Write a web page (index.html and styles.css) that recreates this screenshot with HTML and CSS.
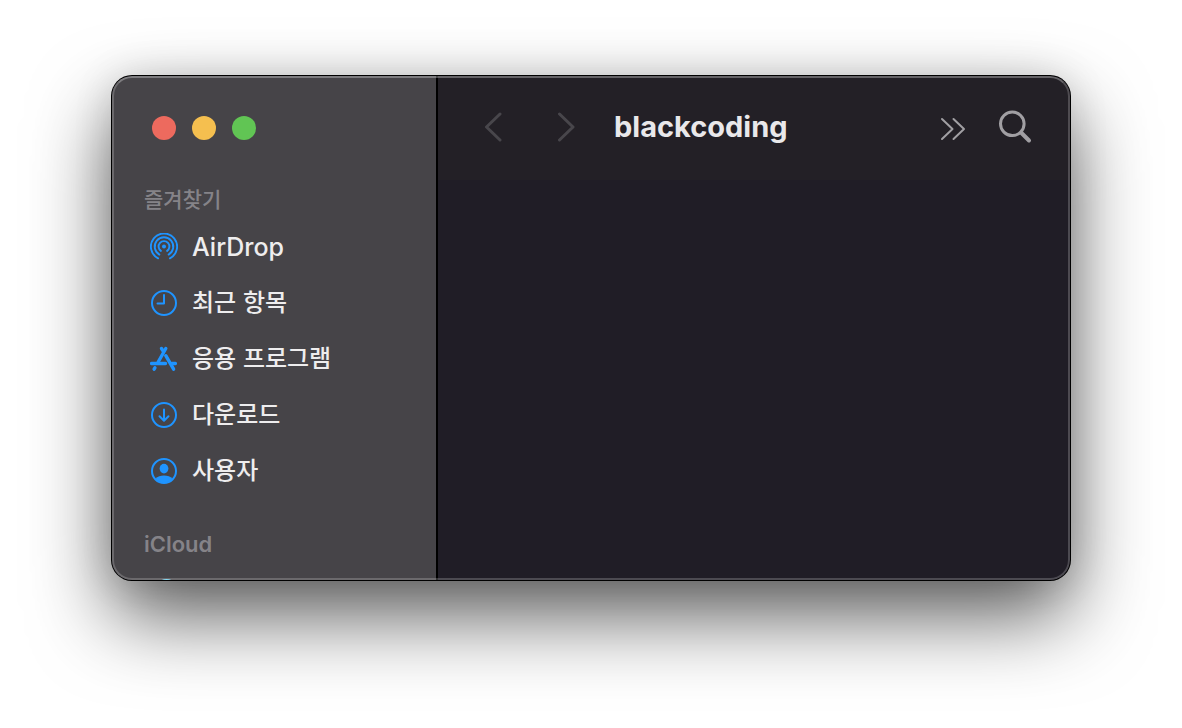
FILE: index.html
```html
<!DOCTYPE html>
<html lang="ko">
<head>
<meta charset="utf-8">
<title>blackcoding</title>
<link rel="stylesheet" href="styles.css">
</head>
<body>
<main class="window">
  <aside class="sidebar">
    <div class="lights">
      <button class="light close" aria-label="닫기"></button>
      <button class="light minimize" aria-label="최소화"></button>
      <button class="light expand" aria-label="확대"></button>
    </div>
    <h2 class="heading">즐겨찾기</h2>
    <nav class="places">
      <a class="place latin" href="#">
        <svg class="icon" viewBox="0 0 28 28" fill="none" stroke="currentColor" stroke-width="1.9" stroke-linecap="round">
          <circle cx="14" cy="13.5" r="2" fill="currentColor" stroke="none"/>
          <path d="M10.9 17.9A5.4 5.4 0 1 1 17.1 17.9"/>
          <path d="M9.4 21.6A9.3 9.3 0 1 1 18.6 21.6"/>
          <path d="M8.1 25.3A13.1 13.1 0 1 1 19.9 25.3"/>
        </svg>
        <span>AirDrop</span>
      </a>
      <a class="place" href="#">
        <svg class="icon" viewBox="0 0 28 28" fill="none" stroke="currentColor" stroke-width="2" stroke-linecap="round" stroke-linejoin="round">
          <circle cx="14" cy="14" r="12"/>
          <path d="M14 6v8.5H7.5"/>
        </svg>
        <span>최근 항목</span>
      </a>
      <a class="place" href="#">
        <svg class="icon" viewBox="0 0 28 28" fill="none" stroke="currentColor" stroke-width="3.4" stroke-linecap="round">
          <path d="M15.8 3.5L8.2 17"/>
          <path d="M1.6 18.5H15.5M21.8 18.5H25.4"/>
          <path d="M11.5 3.5L13.2 6.1M15.8 10.7L23.6 24.2"/>
          <path d="M4.9 22.8L4.1 24.2"/>
        </svg>
        <span>응용 프로그램</span>
      </a>
      <a class="place" href="#">
        <svg class="icon" viewBox="0 0 28 28" fill="none" stroke="currentColor" stroke-width="2" stroke-linecap="round" stroke-linejoin="round">
          <circle cx="14" cy="14" r="12"/>
          <path d="M14 8.5V19.5M9.5 15.3L14 19.8L18.5 15.3"/>
        </svg>
        <span>다운로드</span>
      </a>
      <a class="place" href="#">
        <svg class="icon" viewBox="0 0 28 28" fill="none">
          <circle cx="14" cy="14" r="12" stroke="currentColor" stroke-width="2"/>
          <ellipse cx="14" cy="11.6" rx="4.4" ry="4.8" fill="currentColor"/>
          <path d="M5.5 22C7.5 19.6 10.5 18.6 14 18.6S20.5 19.6 22.5 22A12 12 0 0 1 5.5 22Z" fill="currentColor"/>
        </svg>
        <span>사용자</span>
      </a>
    </nav>
    <h2 class="heading next">iCloud</h2>
    <nav class="places">
      <a class="place cloud" href="#" aria-label="iCloud Drive">
        <svg class="icon" viewBox="0 0 28 28" fill="none" stroke="currentColor" stroke-width="2">
          <path d="M7 21a6 6 0 0 1 0-12A10 10 0 0 1 26 9a6 6 0 0 1-2 12Z"/>
        </svg>
      </a>
    </nav>
  </aside>
  <section class="content">
    <header class="toolbar">
      <div class="history">
        <button class="tool dim" aria-label="뒤로">
          <svg width="32" height="32" viewBox="0 0 32 32"><path d="M22 2L8.5 15L22 28"/></svg>
        </button>
        <button class="tool dim" aria-label="앞으로">
          <svg width="32" height="32" viewBox="0 0 32 32"><path d="M9.5 2L23 15L9.5 28"/></svg>
        </button>
      </div>
      <h1 class="title">blackcoding</h1>
      <button class="tool more" aria-label="더 보기">
        <svg width="32" height="32" viewBox="0 0 32 32"><path d="M4 7L14.5 17L4 27M15.5 7L26 17L15.5 27"/></svg>
      </button>
      <button class="tool search" aria-label="검색">
        <svg width="36" height="36" viewBox="0 0 36 36"><circle cx="14.3" cy="13.8" r="11.8"/><path d="M23.5 23L31 30.5" stroke-width="4"/></svg>
      </button>
    </header>
  </section>
</main>
</body>
</html>
```
FILE: styles.css
```css
* {
  box-sizing: border-box;
}

body {
  margin: 0;
  height: 100vh;
  padding: 76px 112px 148px;
  background: #fff;
  font-family: Inter, "Noto Sans CJK KR", sans-serif;
}

.window {
  position: relative;
  display: flex;
  height: 100%;
  border-radius: 20px;
  overflow: hidden;
  background: #201d26;
  box-shadow:
    0 0 0 1px #000,
    0 0 40px rgba(0, 0, 0, 0.12),
    0 36px 80px rgba(0, 0, 0, 0.64);
}

/* light rim over the window's edge */
.window::after {
  content: "";
  position: absolute;
  inset: 0;
  border: 2px solid rgba(255, 255, 255, 0.2);
  border-top-color: rgba(255, 255, 255, 0.3);
  border-radius: 20px;
  pointer-events: none;
}

.sidebar {
  flex: none;
  width: 326px;
  overflow: hidden;
  background: #464448;
  border-right: 2px solid #000;
}

.lights {
  display: flex;
  align-items: center;
  gap: 16px;
  height: 104px;
  padding-left: 40px;
}

.light {
  width: 24px;
  height: 24px;
  padding: 0;
  border: 0;
  border-radius: 50%;
}

.close { background: #ed6a5e; }
.minimize { background: #f5bf4f; }
.expand { background: #61c554; }

.heading {
  height: 39px;
  margin: 0;
  padding-left: 32px;
  font-size: 22px;
  font-weight: 600;
  line-height: 39px;
  color: #858388;
}

.heading:not(.next) {
  font-family: "Noto Sans CJK KR", sans-serif;
  font-size: 21px;
  font-weight: 500;
  line-height: 37px;
}

.next {
  margin-top: 26px;
}

.place {
  display: flex;
  align-items: center;
  gap: 14px;
  height: 56px;
  padding-left: 38px;
  font-family: "Noto Sans CJK KR", sans-serif;
  font-size: 24px;
  font-weight: 500;
  line-height: 32px;
  color: #eeedee;
  text-decoration: none;
}

.place span {
  padding-bottom: 4px;
}

.latin {
  font-family: Inter, sans-serif;
  font-size: 25px;
}

.latin span {
  padding-bottom: 0;
}

.icon {
  flex: none;
  width: 28px;
  height: 28px;
  color: #1f94ff;
}

.cloud .icon {
  color: #6ad4f5;
}

.content {
  flex: 1;
  min-width: 0;
}

.toolbar {
  display: flex;
  align-items: center;
  height: 104px;
  padding: 0 36px 0 40px;
  background: #232026;
}

.history {
  display: flex;
  gap: 40px;
}

.title {
  flex: 1;
  margin: 0 0 0 32px;
  padding-bottom: 2px;
  font-size: 29px;
  font-weight: 700;
  line-height: 40px;
  color: #e9e8ea;
}

.tool {
  display: flex;
  padding: 0;
  border: 0;
  background: none;
  color: #a19fa3;
}

.tool svg {
  fill: none;
  stroke: currentColor;
  stroke-width: 2;
  stroke-linecap: round;
  stroke-linejoin: round;
}

.dim {
  color: #48464b;
}

.dim svg,
.search svg {
  stroke-width: 3;
}

.search {
  margin-left: 28px;
}
```
